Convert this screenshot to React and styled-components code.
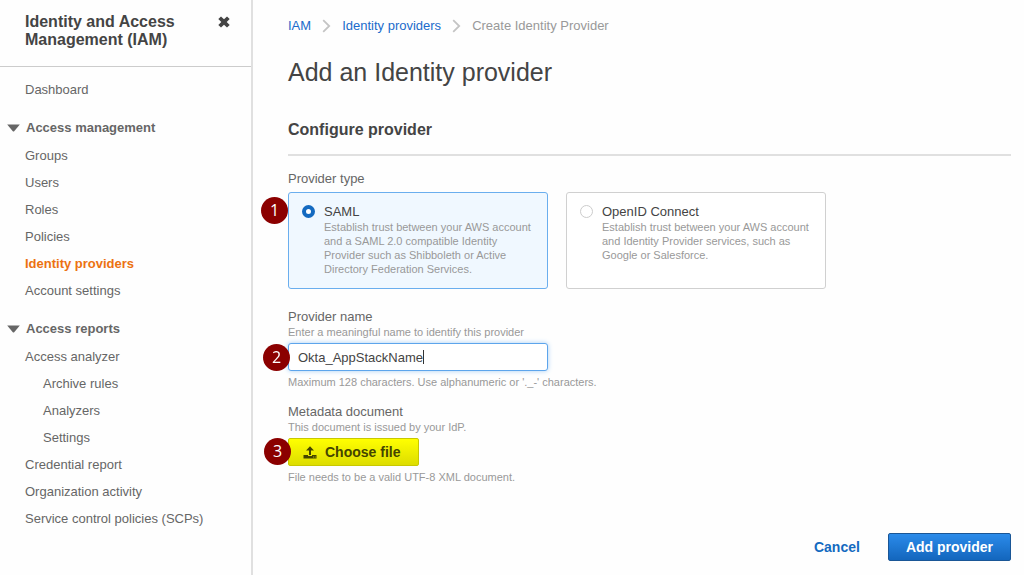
import React, { useState } from "react";
import styled, { createGlobalStyle } from "styled-components";

const accessManagement = ["Groups", "Users", "Roles", "Policies", "Identity providers", "Account settings"];

const accessReports = [
    { label: "Access analyzer" },
    { label: "Archive rules", nested: true },
    { label: "Analyzers", nested: true },
    { label: "Settings", nested: true },
    { label: "Credential report" },
    { label: "Organization activity" },
    { label: "Service control policies (SCPs)" },
];

const providerTypes = [
    {
        id: "saml",
        label: "SAML",
        text: "Establish trust between your AWS account and a SAML 2.0 compatible Identity Provider such as Shibboleth or Active Directory Federation Services.",
    },
    {
        id: "openid",
        label: "OpenID Connect",
        text: "Establish trust between your AWS account and Identity Provider services, such as Google or Salesforce.",
    },
];

const ChevronIcon = () => (
    <svg width="9" height="14" viewBox="0 0 9 14" fill="none" stroke="#c4c4c4" strokeWidth="1.8" aria-hidden="true">
        <path d="M1.2 1.2 7.2 7l-6 5.8" />
    </svg>
);

const CaretIcon = () => (
    <svg width="13" height="8" viewBox="0 0 13 8" fill="#666" aria-hidden="true">
        <path d="M.2.5h12.600L7.2 7.200q-.7.7-1.4 0z" />
    </svg>
);

const CloseIcon = () => (
    <svg width="12" height="12" viewBox="0 0 12 12" fill="#444" aria-hidden="true">
        <path d="M3 .4 6 3.2 9 .4 11.700 3 8.700 6l3 3L9 11.600 6 8.800l-3 2.800L.3 9l3-3-3-3z" />
    </svg>
);

const UploadIcon = () => (
    <svg width="14" height="13" viewBox="0 0 14 13" fill="#444400" aria-hidden="true">
        <path d="M7 .3 11 4.600H8V9H6V4.600H3z" />
        <path d="M.5 9H5v1h4V9h4.500v3.500H.5z" />
        <path d="M10 10.500h1v1h-1zM11.700 10.500h1v1h-1z" fill="#b8b800" />
    </svg>
);

export default function App() {
    const [type, setType] = useState("saml");
    const [name, setName] = useState("Okta_AppStackName");

    return (
        <Page>
            <GlobalStyle />
            <Sidebar>
                <SidebarHeader>
                    <SidebarTitle>Identity and Access Management (IAM)</SidebarTitle>
                    <CloseButton type="button" aria-label="Close"><CloseIcon /></CloseButton>
                </SidebarHeader>
                <Nav>
                    <NavLink href="#">Dashboard</NavLink>
                    <NavHeading><CaretIcon />Access management</NavHeading>
                    {accessManagement.map((label) => (
                        <NavLink key={label} href="#" $active={label === "Identity providers"}>{label}</NavLink>
                    ))}
                    <NavHeading><CaretIcon />Access reports</NavHeading>
                    {accessReports.map(({ label, nested }) => (
                        <NavLink key={label} href="#" $nested={nested}>{label}</NavLink>
                    ))}
                </Nav>
            </Sidebar>

            <Main>
                <Breadcrumb>
                    <a href="#">IAM</a>
                    <ChevronIcon />
                    <a href="#">Identity providers</a>
                    <ChevronIcon />
                    <span>Create Identity Provider</span>
                </Breadcrumb>
                <Title>Add an Identity provider</Title>
                <SectionTitle>Configure provider</SectionTitle>

                <Field>
                    <Label as="div" id="type-label">Provider type</Label>
                    <Cards role="radiogroup" aria-labelledby="type-label">
                        {providerTypes.map((item) => (
                            <Card key={item.id} $selected={type === item.id}>
                                <Radio
                                    type="radio"
                                    name="type"
                                    checked={type === item.id}
                                    onChange={() => setType(item.id)}
                                />
                                <CardBody>
                                    <CardTitle>{item.label}</CardTitle>
                                    <Hint>{item.text}</Hint>
                                </CardBody>
                            </Card>
                        ))}
                        <Step $left={-27} $top={5}>1</Step>
                    </Cards>
                </Field>

                <Field>
                    <Label htmlFor="name">Provider name</Label>
                    <Hint>Enter a meaningful name to identify this provider</Hint>
                    <Control>
                        <TextInput id="name" autoFocus value={name} onChange={(e) => setName(e.target.value)} />
                        <TextCursor />
                        <Step $left={-25} $top={1}>2</Step>
                    </Control>
                    <Hint>Maximum 128 characters. Use alphanumeric or '._-' characters.</Hint>
                </Field>

                <Field>
                    <Label as="div" id="doc-label">Metadata document</Label>
                    <Hint>This document is issued by your IdP.</Hint>
                    <Control>
                        <FileButton type="button" aria-describedby="doc-label"><UploadIcon />Choose file</FileButton>
                        <Step $left={-24} $top={0}>3</Step>
                    </Control>
                    <Hint>File needs to be a valid UTF-8 XML document.</Hint>
                </Field>

                <Footer>
                    <CancelButton type="button">Cancel</CancelButton>
                    <PrimaryButton type="button">Add provider</PrimaryButton>
                </Footer>
            </Main>
        </Page>
    );
}

const GlobalStyle = createGlobalStyle`
  * {
    box-sizing: border-box;
  }
  body {
    margin: 0;
    background: #fefefe;
    color: #666;
    font-family: "Liberation Sans", Arial, sans-serif;
    font-size: 13px;
    line-height: 16px;
  }
  a {
    text-decoration: none;
  }
  button, input {
    font-family: inherit;
  }
`;

const Page = styled.div`
  display: flex;
  min-height: 100vh;
`;

const Sidebar = styled.aside`
  flex: 0 0 253px;
  border-right: 2px solid #e0e0e0;
`;

const SidebarHeader = styled.div`
  display: flex;
  justify-content: space-between;
  align-items: flex-start;
  padding: 13px 21px 17px 25px;
  border-bottom: 1px solid #ccc;
`;

const SidebarTitle = styled.h2`
  margin: 0;
  max-width: 170px;
  font-size: 16px;
  line-height: 18px;
  color: #444;
`;

const CloseButton = styled.button`
  display: flex;
  padding: 3px 0;
  border: 0;
  background: none;
  cursor: pointer;
`;

const Nav = styled.nav`
  display: flex;
  flex-direction: column;
  padding-top: 9px;
`;

const NavLink = styled.a`
  padding-left: ${({ $nested }) => ($nested ? "43px" : "25px")};
  line-height: 27px;
  color: ${({ $active }) => ($active ? "#ec7211" : "#666")};
  font-weight: ${({ $active }) => ($active ? "bold" : "normal")};
`;

const NavHeading = styled.h3`
  display: flex;
  align-items: center;
  gap: 6px;
  margin: 10px 0 0;
  padding-left: 7px;
  font-size: 13px;
  line-height: 29px;
`;

const Main = styled.main`
  flex: 1;
  display: flex;
  flex-direction: column;
  padding: 18px 13px 14px 35px;
`;

const Breadcrumb = styled.nav`
  display: flex;
  align-items: center;
  gap: 11px;
  color: #999;
  a {
    color: #1a6bcb;
  }
`;

const Title = styled.h1`
  margin: 22px 0 0;
  font-size: 25px;
  font-weight: normal;
  line-height: 32px;
  color: #444;
`;

const SectionTitle = styled.h2`
  margin: 32px 0 0;
  padding-bottom: 14px;
  border-bottom: 2px solid #e0e0e0;
  font-size: 16px;
  line-height: 20px;
  color: #444;
`;

const Field = styled.div`
  margin-top: 14px;
  & + & {
    margin-top: 19px;
  }
  & + & + & {
    margin-top: 14px;
  }
`;

const Label = styled.label`
  display: block;
  line-height: 17px;
`;

const Hint = styled.div`
  font-size: 11px;
  line-height: 14px;
  color: #999;
`;

const Cards = styled.div`
  position: relative;
  display: grid;
  grid-template-columns: 1fr 1fr;
  gap: 18px;
  max-width: 538px;
  margin-top: 5px;
`;

const Card = styled.label`
  display: flex;
  align-items: flex-start;
  gap: 9px;
  padding: 11px 13px 12px;
  border: 1px solid ${({ $selected }) => ($selected ? "#6aaeee" : "#d0d0d0")};
  border-radius: 3px;
  background: ${({ $selected }) => ($selected ? "#f0f8ff" : "#fff")};
`;

const Radio = styled.input`
  appearance: none;
  flex: none;
  width: 13px;
  height: 13px;
  margin: 1px 0;
  border: 1px solid #ccc;
  border-radius: 50%;
  background: #fff;
  &:checked {
    border: 4px solid #146ac0;
  }
`;

const CardBody = styled.div`
  flex: 1;
`;

const CardTitle = styled.div`
  line-height: 16px;
  color: #444;
`;

const Control = styled.div`
  position: relative;
  margin: 4px 0;
`;

const TextInput = styled.input`
  display: block;
  width: 100%;
  max-width: 260px;
  height: 28px;
  padding: 0 9px;
  border: 1px solid #5da5ec;
  border-radius: 3px;
  outline: none;
  background: #fff;
  color: #444;
  caret-color: transparent;
  font-size: 13px;
  box-shadow: 0 0 5px #a8cff5;
`;

// sits right after the typed name
const TextCursor = styled.span`
  position: absolute;
  left: 135px;
  top: 7px;
  width: 1px;
  height: 14px;
  background: #333;
`;

const Step = styled.span`
  position: absolute;
  left: ${({ $left }) => $left}px;
  top: ${({ $top }) => $top}px;
  width: 27px;
  height: 27px;
  border-radius: 50%;
  background: #8b0000;
  color: #fff;
  font-family: "Open Sans", sans-serif;
  font-size: 16px;
  line-height: 27px;
  text-align: center;
`;

const Button = styled.button`
  display: flex;
  align-items: center;
  justify-content: center;
  height: 28px;
  border: 1px solid transparent;
  border-radius: 2px;
  font-size: 14px;
  font-weight: bold;
  cursor: pointer;
`;

const FileButton = styled(Button)`
  gap: 8px;
  padding: 0 18px 0 14px;
  border-color: #c8c800;
  background: linear-gradient(#ffff00, #dddd00);
  color: #444400;
`;

const Footer = styled.div`
  display: flex;
  justify-content: flex-end;
  gap: 10px;
  margin-top: auto;
`;

const CancelButton = styled(Button)`
  padding: 0 17px;
  background: none;
  color: #146ac0;
`;

const PrimaryButton = styled(Button)`
  padding: 0 17px;
  border-color: #1a5696;
  background: linear-gradient(#2b8bea, #1366bd);
  color: #fff;
`;
